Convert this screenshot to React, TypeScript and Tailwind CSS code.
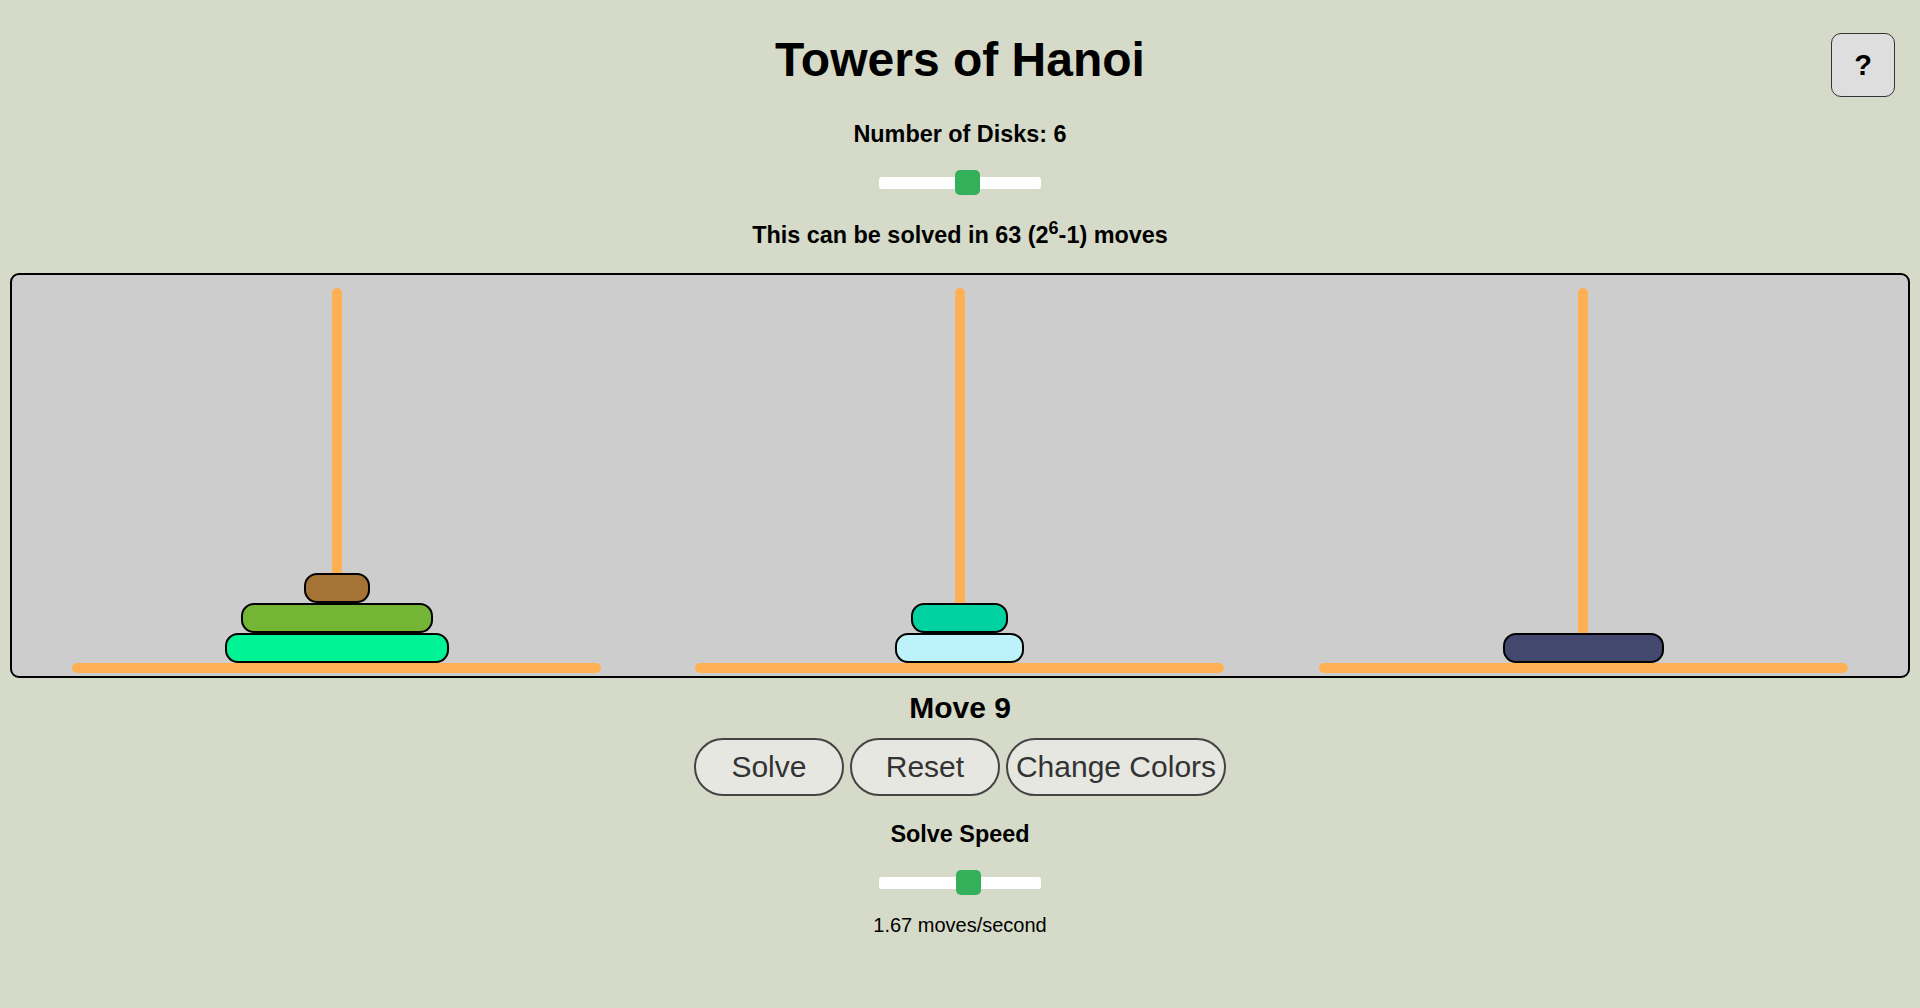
import React from "react";

type DiskT = { w: number; color: string };

const towers: DiskT[][] = [
  [
    { w: 66, color: "bg-[#a57336]" },
    { w: 192, color: "bg-[#74b536]" },
    { w: 224, color: "bg-[#00f495]" },
  ],
  [
    { w: 97, color: "bg-[#00d2a2]" },
    { w: 129, color: "bg-[#bdf2fb]" },
  ],
  [{ w: 161, color: "bg-[#43486e]" }],
];

function Slider({ thumbLeft, className }: { thumbLeft: number; className: string }) {
  return (
    <div className={`relative w-[162px] h-[25px] flex items-center ${className}`}>
      <div className="w-full h-[12px] bg-white rounded-[3px]" />
      <div
        className="absolute top-0 w-[25px] h-[25px] rounded-[5px] bg-[#35b05a]"
        style={{ left: thumbLeft }}
      />
    </div>
  );
}

function Tower({ disks }: { disks: DiskT[] }) {
  return (
    <div className="flex-1 flex flex-col items-center">
      <div className="flex-1 grid w-full">
        <div className="col-start-1 row-start-1 justify-self-center w-[10px] h-full bg-[#ffb055] rounded-t-full" />
        <div className="col-start-1 row-start-1 self-end justify-self-center flex flex-col items-center">
          {disks.map((d, i) => (
            <div
              key={i}
              className={`h-[30px] border-2 border-black rounded-[13px] ${d.color}`}
              style={{ width: d.w }}
            />
          ))}
        </div>
      </div>
      <div className="w-[529px] h-[10px] rounded-full bg-[#ffb055]" />
    </div>
  );
}

export default function App() {
  return (
    <div className="relative min-h-screen bg-[#d6dac8] text-black font-['Liberation_Sans',Arial,sans-serif]">
      <button className="absolute top-[33px] right-[25px] w-[64px] h-[64px] rounded-[10px] border border-[#333] bg-[#dedede] text-[29px] font-bold leading-none flex items-center justify-center">
        ?
      </button>
      <div className="flex flex-col items-center px-[10px]">
        <h1 className="mt-[32px] text-[48px] leading-[56px] font-bold">Towers of Hanoi</h1>
        <div className="mt-[32px] text-[23.4px] leading-[28px] font-bold">Number of Disks: 6</div>
        <Slider thumbLeft={76} className="mt-[22px]" />
        <div className="mt-[26px] text-[23.4px] leading-[28px] font-bold">
          This can be solved in 63 (2<sup className="text-[18px] top-[-9.5px]">6</sup>-1) moves
        </div>
        <div className="mt-[24px] w-full h-[405px] border-2 border-black rounded-[9px] bg-[#cdcdcd] flex px-[13px] pt-[13px] pb-[3px]">
          {towers.map((t, i) => (
            <Tower key={i} disks={t} />
          ))}
        </div>
        <div className="mt-[12px] text-[30px] leading-[36px] font-bold">Move 9</div>
        <div className="mt-[12px] flex gap-[6px]">
          <button className="min-w-[150px] px-[8px] py-[10px] border-2 border-[#444] rounded-full bg-[#e6e7e0] text-[#333] text-[30px] leading-[34px]">
            Solve
          </button>
          <button className="min-w-[150px] px-[8px] py-[10px] border-2 border-[#444] rounded-full bg-[#e6e7e0] text-[#333] text-[30px] leading-[34px]">
            Reset
          </button>
          <button className="min-w-[150px] px-[8px] py-[10px] border-2 border-[#444] rounded-full bg-[#e6e7e0] text-[#333] text-[30px] leading-[34px]">
            Change Colors
          </button>
        </div>
        <div className="mt-[24px] text-[23.4px] leading-[28px] font-bold">Solve Speed</div>
        <Slider thumbLeft={77} className="mt-[22px]" />
        <div className="mt-[18px] text-[20px] leading-[24px]">1.67 moves/second</div>
      </div>
    </div>
  );
}
